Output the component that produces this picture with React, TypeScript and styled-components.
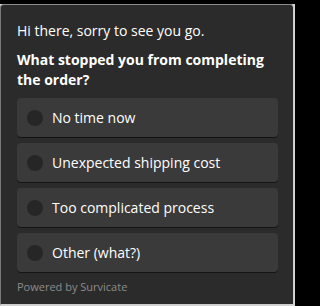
import React from "react";
import styled, { createGlobalStyle } from "styled-components";

const GlobalStyle = createGlobalStyle`
  html, body {
    margin: 0;
    padding: 0;
    background: #000;
  }
  body {
    font-family: "Open Sans", "Liberation Sans", sans-serif;
  }
`;

const Frame = styled.div`
  width: 295px;
  height: 306px;
  box-sizing: border-box;
  padding: 4px 1px 1px 0;
  background: linear-gradient(to bottom, #000 0, #000 4px, #d4d4d4 4px);
`;

const Card = styled.div`
  height: 100%;
  box-sizing: border-box;
  background: #2b2b2b;
  border: 1px solid;
  border-color: #8a8a8a #cfcfcf #cfcfcf #7a7a7a;
  border-radius: 4px 4px 0 0;
  padding: 16px 15px 0 16px;
  color: #fff;
`;

const Greeting = styled.p`
  margin: 0;
  font-size: 14px;
  line-height: 20px;
`;

const Question = styled.h2`
  margin: 9px 0 8px;
  font-size: 14px;
  font-weight: 700;
  line-height: 20px;
`;

const Options = styled.div`
  display: flex;
  flex-direction: column;
  gap: 6px;
`;

const Option = styled.label`
  display: flex;
  align-items: center;
  gap: 9px;
  height: 39px;
  box-sizing: border-box;
  padding: 0 10px;
  background: #3a3a3a;
  border-radius: 4px;
  box-shadow: 0 1px 0 #141414;
  font-size: 14px;
  cursor: pointer;
`;

const Radio = styled.span`
  width: 16px;
  height: 16px;
  border-radius: 50%;
  background: #262626;
  flex-shrink: 0;
`;

const Powered = styled.div`
  margin-top: 7px;
  font-size: 11px;
  color: #8c8c8c;
`;

const answers = [
  "No time now",
  "Unexpected shipping cost",
  "Too complicated process",
  "Other (what?)",
];

export default function App() {
  return (
    <>
      <GlobalStyle />
      <Frame>
        <Card>
          <Greeting>Hi there, sorry to see you go.</Greeting>
          <Question>What stopped you from completing the order?</Question>
          <Options>
            {answers.map(a => (
              <Option key={a}>
                <Radio />
                {a}
              </Option>
            ))}
          </Options>
          <Powered>Powered by Survicate</Powered>
        </Card>
      </Frame>
    </>
  );
}
